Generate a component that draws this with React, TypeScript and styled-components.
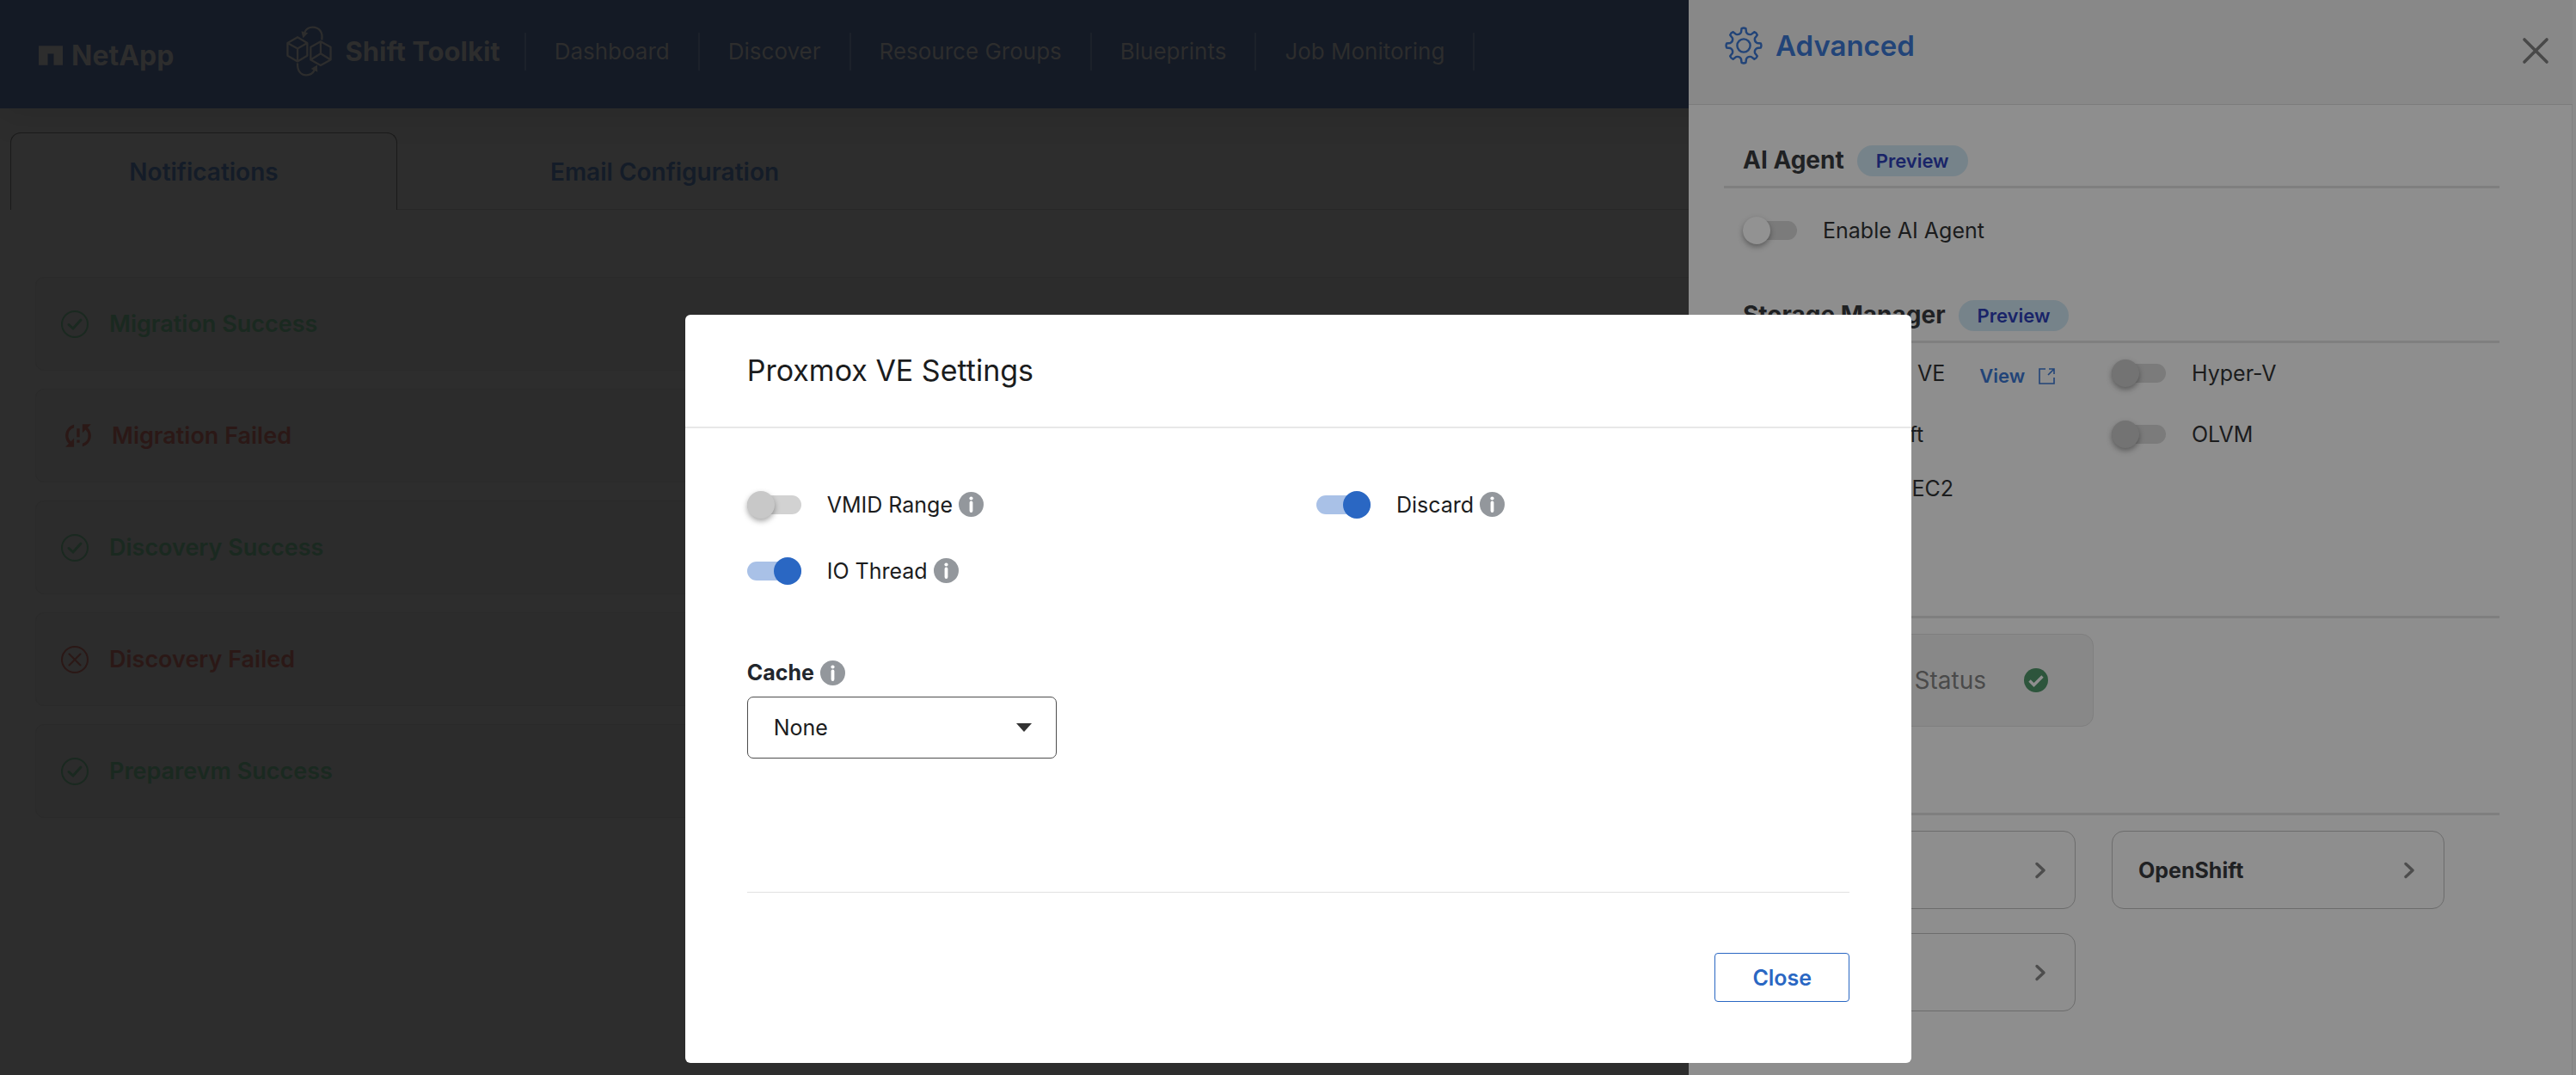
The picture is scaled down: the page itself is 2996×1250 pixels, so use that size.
import React from "react";
import styled, { createGlobalStyle, css } from "styled-components";

const color = {
  page: "#2d2d2d",
  pageLine: "#272727",
  nav: "#141a25",
  navLine: "#1c212a",
  tabText: "#141c28",
  success: "#1a2920",
  danger: "#2b1816",
  drawer: "#8e8e8e",
  drawerHead: "#888888",
  drawerLine: "#7f7f7f",
  drawerText: "#1f2123",
  drawerLink: "#224478",
  blue: "#2a67c3",
  text: "#1b1c1d",
};

const GlobalStyle = createGlobalStyle`
  *, *::before, *::after { box-sizing: border-box; }
  html { background: ${color.page}; }
  body { margin: 0; overflow: hidden; font-family: Inter, "Liberation Sans", sans-serif; }
  h1, h2, ul, p { margin: 0; padding: 0; }
  ul { list-style: none; }
  button, select { font-family: inherit; }
  svg { display: block; flex: none; }
`;

/* ---------- page ---------- */

const Page = styled.div`
  min-height: 100vh;
  background: ${color.page};
`;

const TopBar = styled.header`
  display: flex;
  align-items: center;
  height: 126px;
  padding: 0 45px 7px;
  background: ${color.nav};
  box-shadow: 0 4px 40px rgba(0, 0, 0, 0.12);
  color: ${color.page};
`;

const Company = styled.a`
  display: flex;
  align-items: center;
  gap: 10px;
  margin: 10px 130px 0 0;
  color: inherit;
  font-size: 32px;
  font-weight: 700;
  line-height: 40px;
  text-decoration: none;
`;

const Product = styled.div`
  display: flex;
  align-items: center;
  gap: 14px;
  margin-right: 28px;
  font-size: 31px;
  font-weight: 700;
  line-height: 40px;
`;

const NavList = styled.ul`
  display: flex;
  border-left: 2px solid ${color.navLine};
`;

const NavItem = styled.li`
  padding: 0 33px;
  border-right: 2px solid ${color.navLine};
`;

const NavLink = styled.a`
  color: inherit;
  font-size: 26px;
  line-height: 44px;
  text-decoration: none;
  white-space: nowrap;
`;

const Tabs = styled.div`
  display: flex;
  margin: 28px 0 0 12px;
  border-bottom: 1px solid ${color.pageLine};
`;

const Tab = styled.button<{ $active?: boolean }>`
  flex: none;
  width: ${(p) => (p.$active ? 450 : 622)}px;
  height: 90px;
  margin-bottom: -1px;
  border: 1px solid transparent;
  border-bottom: 0;
  border-radius: 12px 12px 0 0;
  background: transparent;
  color: ${color.tabText};
  font-size: 28px;
  font-weight: 600;
  ${(p) =>
    p.$active &&
    css`
      border-color: #1a1a1a;
      background: ${color.page};
    `}
`;

const CardList = styled.ul`
  display: grid;
  gap: 21px;
  margin: 78px 41px 0;
`;

const Card = styled.li<{ $tone: "success" | "danger" }>`
  display: flex;
  align-items: center;
  gap: 24px;
  height: 109px;
  padding-left: 29px;
  border: 1px solid #2a2a2a;
  border-radius: 10px;
  background: #2c2c2c;
  color: ${(p) => color[p.$tone]};
  font-size: 27px;
  font-weight: 600;
`;

/* ---------- shared controls ---------- */

const SwitchRow = styled.div`
  display: flex;
  align-items: center;
`;

const SwitchLabel = styled.label`
  display: flex;
  align-items: center;
  gap: 30px;
  color: ${color.text};
  font-size: 25px;
  line-height: 32px;
  white-space: nowrap;
`;

const SwitchInput = styled.input<{ $dim?: boolean }>`
  appearance: none;
  display: flex;
  align-items: center;
  flex: none;
  width: 63px;
  height: 22px;
  margin: 0;
  border-radius: 11px;
  background: ${(p) => (p.$dim ? "#7b7b7b" : "#d2d2d2")};

  &::before {
    content: "";
    flex: none;
    width: 32px;
    height: 32px;
    border-radius: 50%;
    background: ${(p) => (p.$dim ? "#737373" : "#c8c8c8")};
    box-shadow: 0 3px 6px rgba(0, 0, 0, 0.35);
  }
  &:checked {
    justify-content: flex-end;
    background: #a9c1e7;
  }
  &:checked::before {
    background: ${color.blue};
    box-shadow: none;
  }
`;

const LightSwitchInput = styled(SwitchInput)`
  &::before {
    background: #929292;
  }
`;

/* ---------- drawer ---------- */

const Drawer = styled.aside`
  position: fixed;
  top: 0;
  right: 0;
  bottom: 0;
  width: 1032px;
  border-right: 4px solid #8b8b8b;
  background: ${color.drawer};
  box-shadow: inset -1px 0 0 #828282;
`;

const DrawerHead = styled.header`
  display: flex;
  align-items: center;
  justify-content: space-between;
  height: 122px;
  padding: 0 27px 4px 42px;
  border-bottom: 1px solid #7c7c7c;
  background: ${color.drawerHead};
`;

const DrawerTitle = styled.h1`
  display: flex;
  align-items: center;
  gap: 15px;
  padding-bottom: 12px;
  color: ${color.drawerLink};
  font-size: 33px;
  font-weight: 600;
  line-height: 44px;
`;

const IconButton = styled.button`
  padding: 0;
  border: 0;
  background: transparent;
  color: #484848;
`;

const DrawerBody = styled.div`
  padding: 47px 85px 0 41px;
`;

const SectionHead = styled.div`
  display: flex;
  align-items: center;
  gap: 15px;
  height: 50px;
  padding: 0 0 11px 22px;
  border-bottom: 3px solid ${color.drawerLine};
`;

const SectionTitle = styled.h2`
  padding-bottom: 2px;
  color: ${color.drawerText};
  font-size: 28px;
  font-weight: 700;
  line-height: 34px;
  white-space: nowrap;
`;

const Pill = styled.span`
  padding: 0 22px;
  border-radius: 18px;
  background: #76838a;
  color: #192468;
  font-size: 22px;
  font-weight: 600;
  line-height: 36px;
`;

const SectionBody = styled.div<{ $top: number; $bottom: number }>`
  padding: ${(p) => p.$top}px 64px ${(p) => p.$bottom}px 22px;
`;

const SwitchGrid = styled.div`
  display: grid;
  grid-template-columns: 1fr 1fr;
  grid-template-rows: 70px 72px 54px;
  column-gap: 42px;
`;

const ViewLink = styled.a`
  display: flex;
  align-items: center;
  gap: 16px;
  margin: 6px 0 0 40px;
  color: ${color.drawerLink};
  font-size: 22px;
  font-weight: 600;
  line-height: 28px;
  text-decoration: none;
`;

const StatusCard = styled.div`
  display: flex;
  align-items: center;
  justify-content: flex-end;
  gap: 44px;
  width: 408px;
  height: 108px;
  padding-right: 52px;
  border: 1px solid ${color.drawerLine};
  border-radius: 14px;
  background: ${color.drawerHead};
  color: #4a4a4a;
  font-size: 28px;
  white-space: nowrap;
`;

const LinkGrid = styled.div`
  display: grid;
  grid-template-columns: 1fr 1fr;
  gap: 28px 42px;
`;

const LinkCard = styled.button`
  display: flex;
  align-items: center;
  height: 91px;
  padding: 0 33px 0 30px;
  border: 1px solid #6c6c6c;
  border-radius: 14px;
  background: transparent;
  color: ${color.drawerText};
  font-size: 25px;
  font-weight: 700;

  & > svg {
    margin-left: auto;
  }
`;

/* ---------- dialog ---------- */

const Overlay = styled.div`
  position: fixed;
  inset: 0;
  display: flex;
  align-items: flex-end;
  justify-content: center;
  padding: 0 0 14px 24px;
`;

const Dialog = styled.section`
  width: 48%;
  border-radius: 6px;
  background: #ffffff;
`;

const DialogHead = styled.header`
  padding: 43px 72px;
  border-bottom: 2px solid #e8e8e8;
`;

const DialogTitle = styled.h1`
  color: ${color.text};
  font-size: 34px;
  font-weight: 400;
  line-height: 44px;
`;

const DialogBody = styled.div`
  margin: 0 72px;
  padding: 50px 0 155px;
  border-bottom: 1px solid #e2e2e2;
`;

const OptionGrid = styled.div`
  display: grid;
  grid-template-columns: 1fr 1fr;
  grid-auto-rows: 77px;
  column-gap: 42px;
`;

const Option = styled.div`
  display: flex;
  align-items: center;
  gap: 7px;
`;

const Field = styled.div`
  display: grid;
  gap: 10px;
  width: 360px;
  margin-top: 62px;
`;

const FieldHead = styled.div`
  display: flex;
  align-items: center;
  gap: 7px;
`;

const FieldLabel = styled.label`
  color: #22262c;
  font-size: 25px;
  font-weight: 700;
  line-height: 36px;
`;

const SelectBox = styled.div`
  display: grid;
  align-items: center;
  color: #333333;

  & > * {
    grid-area: 1 / 1;
  }
  & > svg {
    justify-self: end;
    margin-right: 29px;
    pointer-events: none;
  }
`;

const Select = styled.select`
  appearance: none;
  width: 100%;
  height: 72px;
  padding: 0 30px;
  border: 1px solid #4d4d4d;
  border-radius: 7px;
  background: #ffffff;
  color: ${color.text};
  font-size: 25px;
`;

const DialogFoot = styled.footer`
  display: flex;
  justify-content: flex-end;
  padding: 70px 72px 71px;
`;

const CloseButton = styled.button`
  width: 157px;
  height: 57px;
  border: 1px solid ${color.blue};
  border-radius: 4px;
  background: #ffffff;
  color: ${color.blue};
  font-size: 25px;
  font-weight: 600;
`;

/* ---------- drawings ---------- */

const CompanyMark = () => (
  <svg width="28" height="23" viewBox="0 0 85 68" fill="currentColor" aria-hidden="true">
    <path d="M0 0H85V68H53V28H32V68H0Z" />
  </svg>
);

const ShiftMark = () => (
  <svg width="55" height="61" viewBox="905 50 165 184" fill="none" stroke="currentColor" strokeWidth="7" strokeLinejoin="round" aria-hidden="true">
    <path d="M947 93L981 113V158L947 178L912 158V113ZM912 113L947 133L981 113M947 133V178" />
    <path d="M1028 108L1063 128V172L1028 192L993 172V128ZM1028 108V150M993 172L1028 150L1063 172" />
    <path d="M1032 103C1037 76 1023 58 1000 58C986 58 976 65 971 77M947 184C945 210 958 226 978 226C992 226 1002 218 1007 207" />
    <path d="M960 72L984 78L966 97ZM1016 190L994 204L1017 215Z" fill="currentColor" stroke="none" />
  </svg>
);

const CircleCheck = () => (
  <svg width="32" height="32" viewBox="0 0 32 32" fill="none" stroke="currentColor" strokeWidth="2" aria-hidden="true">
    <circle cx="16" cy="16" r="15" />
    <path d="M9 16.5L14 21L23 11" strokeWidth="3" strokeLinecap="round" />
  </svg>
);

const CircleCross = () => (
  <svg width="32" height="32" viewBox="0 0 32 32" fill="none" stroke="currentColor" strokeWidth="2" aria-hidden="true">
    <circle cx="16" cy="16" r="15" />
    <path d="M9.500 9.500L22.500 22.500M22.500 9.500L9.500 22.500" strokeLinecap="round" />
  </svg>
);

const SyncProblem = () => (
  <svg width="35" height="33" viewBox="0 2 21 20" fill="currentColor" aria-hidden="true">
    <path d="M3 12c0 2.210.910 4.200 2.360 5.640L3 20h6v-6l-2.240 2.240A6.003 6.003 0 0 1 5 12a6 6 0 0 1 4-5.650V4.260C5.550 5.150 3 8.270 3 12zm8 5h2v-2h-2v2zM21 4h-6v6l2.240-2.240A6.003 6.003 0 0 1 19 12a6 6 0 0 1-4 5.650v2.090c3.450-.890 6-4.010 6-7.740 0-2.210-.910-4.200-2.360-5.640L21 4zm-10 9h2V7h-2v6z" />
  </svg>
);

const at = (radius: number, degrees: number) => {
  const a = (degrees * Math.PI) / 180;
  return `${(22 + radius * Math.sin(a)).toFixed(2)} ${(22 - radius * Math.cos(a)).toFixed(2)}`;
};

const gearPath =
  Array.from({ length: 8 }, (_, i) => {
    const c = i * 45;
    return `${i ? "L" : "M"}${at(15.8, c - 11)}L${at(20, c - 7)}Q${at(21, c)} ${at(20, c + 7)}L${at(15.8, c + 11)}Q${at(13, c + 22.5)} ${at(15.8, c + 34)}`;
  }).join("") + "Z";

const Gear = () => (
  <svg width="44" height="44" viewBox="0 0 44 44" fill="none" stroke="currentColor" strokeWidth="2.400" strokeLinejoin="round" aria-hidden="true">
    <path d={gearPath} />
    <circle cx="22" cy="22" r="7.600" />
  </svg>
);

const Cross = () => (
  <svg width="32" height="32" viewBox="0 0 32 32" fill="none" stroke="currentColor" strokeWidth="3.600" strokeLinecap="round" aria-hidden="true">
    <path d="M3 3L29 29M29 3L3 29" />
  </svg>
);

const External = () => (
  <svg width="20" height="20" viewBox="0 0 20 20" fill="none" stroke="currentColor" strokeWidth="1.600" aria-hidden="true">
    <path d="M8 2H1V19H18V12M12 2H18V8M18 2L11 9" />
  </svg>
);

const StatusOk = () => (
  <svg width="28" height="28" viewBox="0 0 28 28" aria-hidden="true">
    <circle cx="14" cy="14" r="14" fill="#2d553c" />
    <path d="M6.500 14.500L11.500 19.500L21.500 9.500" fill="none" stroke="#8e8e8e" strokeWidth="3.400" />
  </svg>
);

const Chevron = () => (
  <svg width="14" height="20" viewBox="0 0 14 20" fill="none" stroke="#4d4d4d" strokeWidth="3.400" strokeLinecap="round" strokeLinejoin="round" aria-hidden="true">
    <path d="M3 2.500L11 10L3 17.500" />
  </svg>
);

const Info = () => (
  <svg width="29" height="29" viewBox="0 0 29 29" role="img" aria-label="More information">
    <circle cx="14.500" cy="14.500" r="14.500" fill="#93979c" />
    <circle cx="14.500" cy="7.500" r="2.100" fill="#ffffff" />
    <path d="M14.500 12.500V22" stroke="#ffffff" strokeWidth="3.800" strokeLinecap="round" />
  </svg>
);

const Caret = () => (
  <svg width="18" height="10" viewBox="0 0 18 10" fill="currentColor" aria-hidden="true">
    <path d="M0 0H18L9 10Z" />
  </svg>
);

/* ---------- composition ---------- */

const navItems = ["Dashboard", "Discover", "Resource Groups", "Blueprints", "Job Monitoring"];

const notifications = [
  { label: "Migration Success", tone: "success", Icon: CircleCheck },
  { label: "Migration Failed", tone: "danger", Icon: SyncProblem },
  { label: "Discovery Success", tone: "success", Icon: CircleCheck },
  { label: "Discovery Failed", tone: "danger", Icon: CircleCross },
  { label: "Preparevm Success", tone: "success", Icon: CircleCheck },
] as const;

const hypervisors = [
  { label: "Proxmox VE", view: true },
  { label: "Hyper-V" },
  { label: "OpenShift" },
  { label: "OLVM" },
  { label: "Amazon EC2" },
];

const options = [
  { label: "VMID Range", on: false },
  { label: "Discard", on: true },
  { label: "IO Thread", on: true },
];

export default function App() {
  return (
    <>
      <GlobalStyle />
      <Page>
        <TopBar>
          <Company href="#home">
            <CompanyMark />
            NetApp
          </Company>
          <Product>
            <ShiftMark />
            Shift Toolkit
          </Product>
          <nav>
            <NavList>
              {navItems.map((item) => (
                <NavItem key={item}>
                  <NavLink href="#nav">{item}</NavLink>
                </NavItem>
              ))}
            </NavList>
          </nav>
        </TopBar>
        <main>
          <Tabs role="tablist">
            <Tab type="button" role="tab" aria-selected="true" $active>
              Notifications
            </Tab>
            <Tab type="button" role="tab" aria-selected="false">
              Email Configuration
            </Tab>
          </Tabs>
          <CardList>
            {notifications.map(({ label, tone, Icon }) => (
              <Card key={label} $tone={tone}>
                <Icon />
                {label}
              </Card>
            ))}
          </CardList>
        </main>
      </Page>

      <Drawer>
        <DrawerHead>
          <DrawerTitle>
            <Gear />
            Advanced
          </DrawerTitle>
          <IconButton type="button" aria-label="Close panel">
            <Cross />
          </IconButton>
        </DrawerHead>
        <DrawerBody>
          <section>
            <SectionHead>
              <SectionTitle>AI Agent</SectionTitle>
              <Pill>Preview</Pill>
            </SectionHead>
            <SectionBody $top={33} $bottom={65}>
              <SwitchRow>
                <SwitchLabel>
                  <LightSwitchInput type="checkbox" role="switch" $dim />
                  Enable AI Agent
                </SwitchLabel>
              </SwitchRow>
            </SectionBody>
          </section>
          <section>
            <SectionHead>
              <SectionTitle>Storage Manager</SectionTitle>
              <Pill>Preview</Pill>
            </SectionHead>
            <SectionBody $top={0} $bottom={74}>
              <SwitchGrid>
                {hypervisors.map(({ label, view }) => (
                  <SwitchRow key={label}>
                    <SwitchLabel>
                      <SwitchInput type="checkbox" role="switch" $dim />
                      {label}
                    </SwitchLabel>
                    {view && (
                      <ViewLink href="#view">
                        View
                        <External />
                      </ViewLink>
                    )}
                  </SwitchRow>
                ))}
              </SwitchGrid>
            </SectionBody>
          </section>
          <section aria-label="Services">
            <SectionHead />
            <SectionBody $top={18} $bottom={53}>
              <StatusCard>
                Status
                <StatusOk />
              </StatusCard>
            </SectionBody>
          </section>
          <section aria-label="Settings">
            <SectionHead />
            <SectionBody $top={18} $bottom={0}>
              <LinkGrid>
                <LinkCard type="button" aria-label="Proxmox VE">
                  <Chevron />
                </LinkCard>
                <LinkCard type="button">
                  OpenShift
                  <Chevron />
                </LinkCard>
                <LinkCard type="button" aria-label="OLVM">
                  <Chevron />
                </LinkCard>
              </LinkGrid>
            </SectionBody>
          </section>
        </DrawerBody>
      </Drawer>

      <Overlay>
        <Dialog role="dialog" aria-modal="true" aria-labelledby="dialog-title">
          <DialogHead>
            <DialogTitle id="dialog-title">Proxmox VE Settings</DialogTitle>
          </DialogHead>
          <DialogBody>
            <OptionGrid>
              {options.map(({ label, on }) => (
                <Option key={label}>
                  <SwitchLabel>
                    <SwitchInput type="checkbox" role="switch" defaultChecked={on} />
                    {label}
                  </SwitchLabel>
                  <Info />
                </Option>
              ))}
            </OptionGrid>
            <Field>
              <FieldHead>
                <FieldLabel htmlFor="cache">Cache</FieldLabel>
                <Info />
              </FieldHead>
              <SelectBox>
                <Select id="cache" defaultValue="None">
                  <option>None</option>
                </Select>
                <Caret />
              </SelectBox>
            </Field>
          </DialogBody>
          <DialogFoot>
            <CloseButton type="button">Close</CloseButton>
          </DialogFoot>
        </Dialog>
      </Overlay>
    </>
  );
}
